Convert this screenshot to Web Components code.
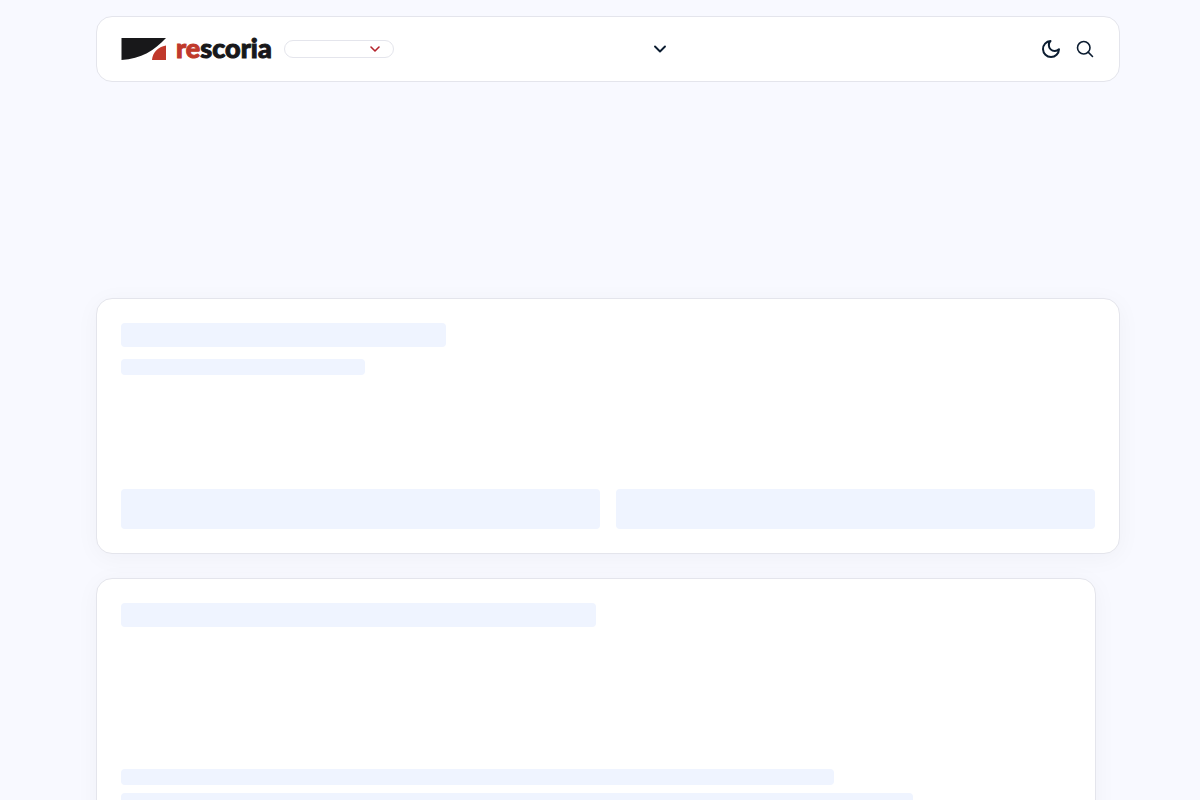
<!DOCTYPE html>
<html lang="en">
<head>
<meta charset="utf-8">
<meta name="viewport" content="width=device-width, initial-scale=1">
<title>rescoria</title>
<style>
  html { scrollbar-width: none; }
  body { margin: 0; background: #f8f9ff; color: #0b1c30; font-family: Lato, "Liberation Sans", sans-serif; }
</style>
</head>
<body>
<rs-page>
  <rs-header slot="header"></rs-header>
  <rs-card>
    <rs-bar size="large" style="--width: 33.333%"></rs-bar>
    <rs-bar style="--width: 25%"></rs-bar>
    <rs-columns>
      <rs-bar size="field"></rs-bar>
      <rs-bar size="field"></rs-bar>
    </rs-columns>
  </rs-card>
  <rs-card kind="article">
    <rs-bar size="large" style="--width: 50%"></rs-bar>
    <rs-lines>
      <rs-bar style="--width: 75%"></rs-bar>
      <rs-bar style="--width: 83.333%"></rs-bar>
    </rs-lines>
  </rs-card>
</rs-page>
<script>
const define = (name, markup) => customElements.define(name, class extends HTMLElement {
  constructor() {
    super();
    const template = document.createElement('template');
    template.innerHTML = markup;
    this.attachShadow({ mode: 'open' }).append(template.content.cloneNode(true));
  }
});

define('rs-page', `
  <style>
    :host { display: block; box-sizing: border-box; max-width: 1040px; margin: 0 auto; padding: 16px 0 24px 16px; }
    main { display: flex; flex-direction: column; gap: 24px; margin-top: 216px; }
  </style>
  <slot name="header"></slot>
  <main><slot></slot></main>`);

define('rs-logo', `
  <style>
    :host { display: block; }
    a { display: flex; align-items: center; gap: 10px; color: #18181a; text-decoration: none; }
    svg { display: block; width: 45px; height: 22px; }
    .name { display: block; padding-bottom: 2px; font-size: 27px; line-height: 24px; font-weight: 900; -webkit-text-stroke: 1px currentColor; }
    .re { color: #c0392b; }
  </style>
  <a href="#">
    <svg viewBox="0 0 45 22" aria-hidden="true">
      <path fill="#18181a" d="M0.500 0H45C34 12 20 21 0.500 22Z"/>
      <path fill="#c0392b" d="M45 7.500V22H31C31.500 14.500 37 9 45 7.500Z"/>
    </svg>
    <span class="name"><span class="re">re</span>scoria</span>
  </a>`);

define('rs-select', `
  <style>
    :host { display: grid; grid-template-rows: 18px; width: 110px; height: 18px; }
    select { grid-area: 1 / 1; appearance: none; box-sizing: border-box; width: 100%; height: 18px; margin: 0; padding: 0 32px 0 12px; border: 1px solid #e4e5ec; border-radius: 9px; background: #fff; font: inherit; font-size: 12px; line-height: 16px; color: inherit; }
    svg { grid-area: 1 / 1; place-self: center end; margin-right: 12px; pointer-events: none; }
  </style>
  <select aria-label="Section"><option value=""></option></select>
  <svg width="14" height="14" viewBox="0 0 14 14" fill="none" stroke="#b4232c" stroke-width="1.6" stroke-linecap="round" stroke-linejoin="round" aria-hidden="true"><path d="m3 5 4 4 4-4"/></svg>`);

define('rs-header', `
  <style>
    :host { display: grid; grid-template-columns: 1fr 128px 1fr; align-items: center; box-sizing: border-box; height: 66px; padding: 0 24px; border: 1px solid #e4e5ec; border-radius: 16px; background: #fff; }
    .brand { display: flex; align-items: center; gap: 12px; }
    button { display: flex; align-items: center; padding: 0; border: 0; background: none; color: inherit; cursor: pointer; }
    svg { display: block; flex: none; fill: none; stroke: currentColor; stroke-linecap: round; stroke-linejoin: round; }
    .menu { justify-content: flex-end; width: 100%; }
    .tools { display: flex; justify-content: flex-end; gap: 14px; }
    .tools button { justify-content: center; width: 20px; height: 22px; }
  </style>
  <div class="brand"><rs-logo></rs-logo><rs-select></rs-select></div>
  <nav><button class="menu" aria-label="Menu"><svg width="24" height="24" viewBox="0 0 24 24" stroke-width="1.9" aria-hidden="true"><path d="m7 9.500 5 5 5-5"/></svg></button></nav>
  <div class="tools">
    <button aria-label="Dark mode"><svg width="20" height="20" viewBox="0 0 20 20" stroke-width="2" aria-hidden="true"><path d="M9.500 2a5.800 5.800 0 0 0 8.500 8.200A8 8 0 1 1 9.500 2Z"/></svg></button>
    <button aria-label="Search"><svg width="20" height="20" viewBox="0 0 24 24" stroke-width="1.9" aria-hidden="true"><circle cx="10.500" cy="10.500" r="7.500"/><path d="m21 21-5.200-5.200"/></svg></button>
  </div>`);

define('rs-card', `
  <style>
    :host { display: flex; flex-direction: column; gap: 12px; box-sizing: border-box; padding: 24px; border: 1px solid #e4e5ec; border-radius: 16px; background: #fff; box-shadow: 0 4px 24px rgba(15, 28, 46, .04); }
    :host([kind="article"]) { margin-right: 24px; }
  </style>
  <slot></slot>`);

define('rs-bar', `
  <style>
    :host { display: block; width: var(--width, 100%); height: 16px; border-radius: 4px; background: #eff4ff; }
    :host([size="large"]) { height: 24px; }
    :host([size="field"]) { height: 40px; }
  </style>`);

define('rs-columns', `
  <style>:host { display: grid; grid-template-columns: 1fr 1fr; gap: 16px; margin-top: 102px; }</style>
  <slot></slot>`);

define('rs-lines', `
  <style>:host { display: flex; flex-direction: column; gap: 8px; margin-top: 130px; }</style>
  <slot></slot>`);
</script>
</body>
</html>
